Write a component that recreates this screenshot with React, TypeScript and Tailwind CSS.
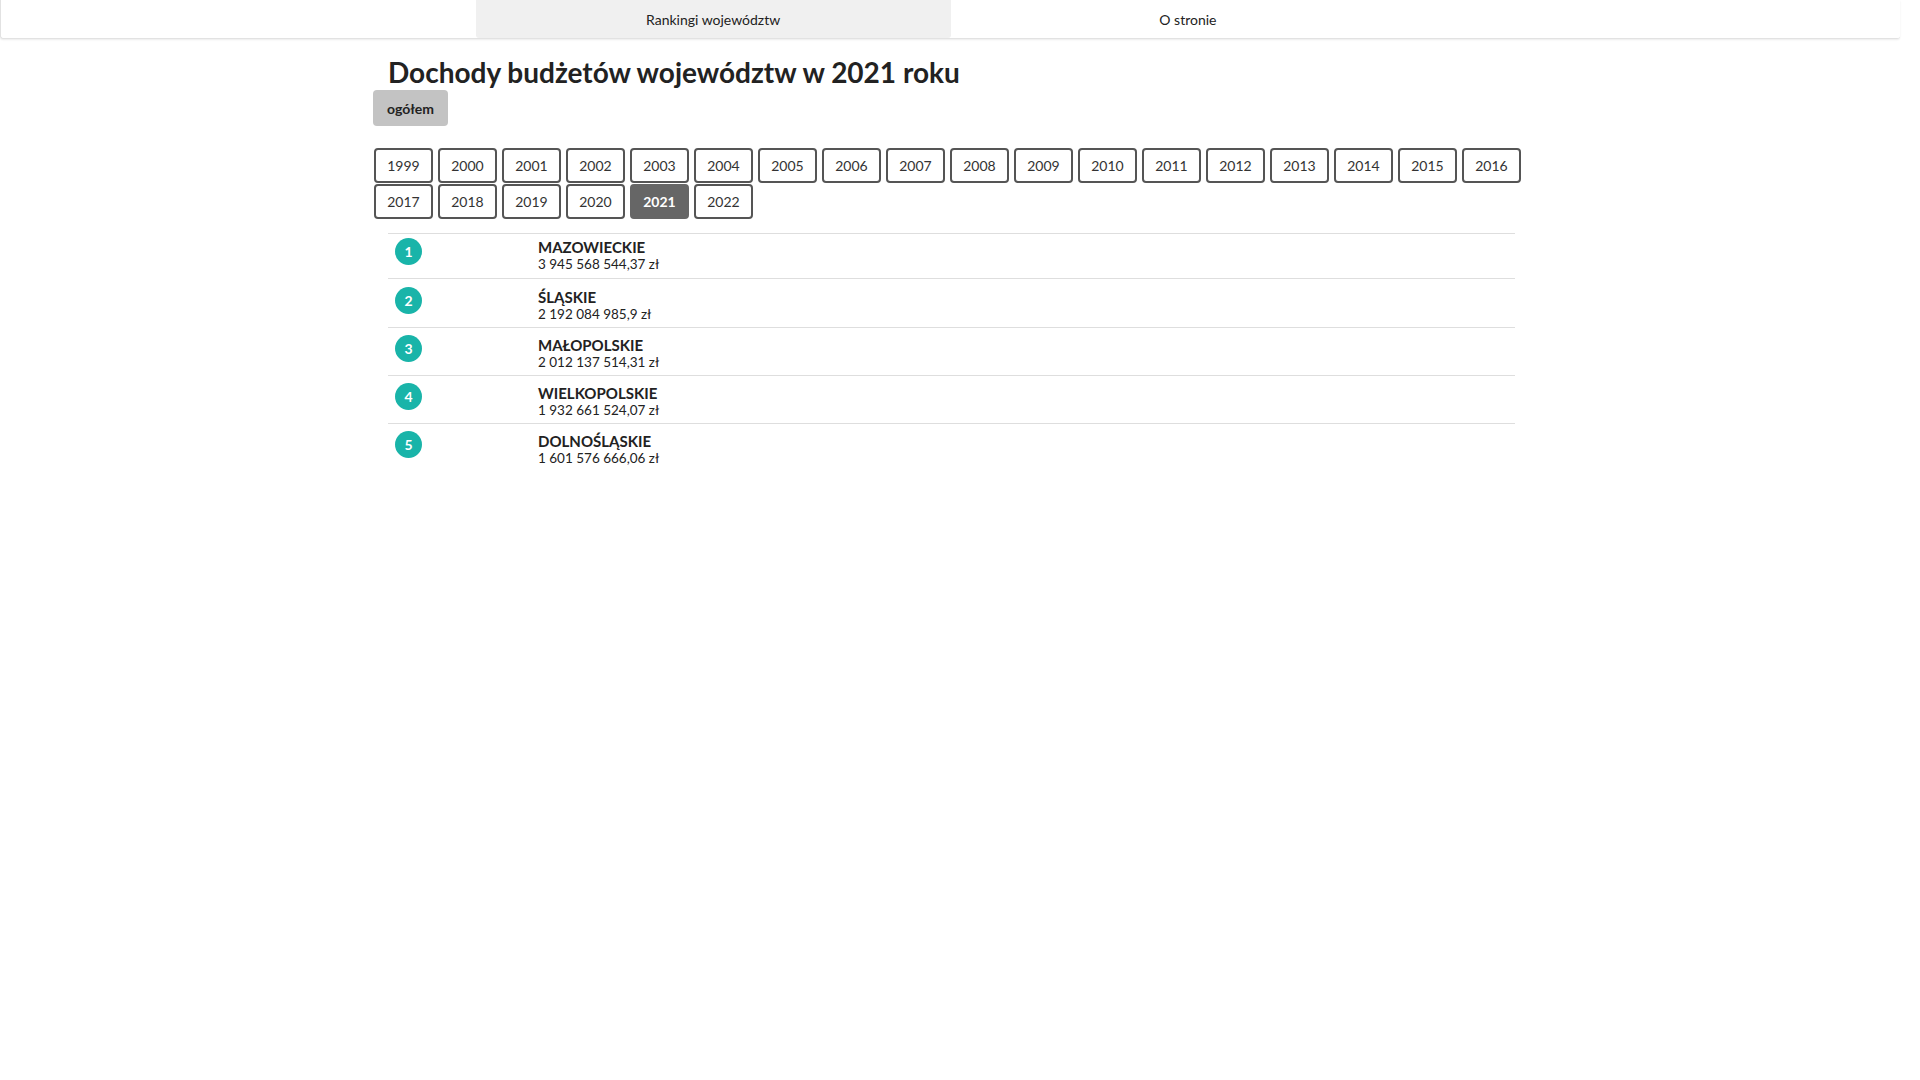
import { useState } from "react";

type Region = {
  name: string;
  value: string;
};

const years = Array.from({ length: 24 }, (_, i) => 1999 + i);

const regions: Region[] = [
  { name: "MAZOWIECKIE", value: "3 945 568 544,37 zł" },
  { name: "ŚLĄSKIE", value: "2 192 084 985,9 zł" },
  { name: "MAŁOPOLSKIE", value: "2 012 137 514,31 zł" },
  { name: "WIELKOPOLSKIE", value: "1 932 661 524,07 zł" },
  { name: "DOLNOŚLĄSKIE", value: "1 601 576 666,06 zł" },
];

export default function App() {
  const [year, setYear] = useState(2021);

  return (
    <div
      className="min-h-screen bg-white text-[#222]"
      style={{ fontFamily: "Lato, 'Noto Sans', sans-serif" }}
    >
      <nav className="grid h-[39px] w-[1900px] grid-cols-4 rounded-b-[3px] border-b border-l border-[#e2e2e2] shadow-[0_1px_2px_rgba(0,0,0,0.08)]">
        <div />
        <a className="flex items-center justify-center rounded-b-[3px] bg-[#f0f0f0] text-[14px]">
          Rankingi województw
        </a>
        <a className="flex items-center justify-center text-[14px]">O stronie</a>
        <div />
      </nav>

      <main className="mx-auto w-[1170px]">
        <h1 className="mt-[15px] pl-[13px] text-[28px] font-bold leading-[36px] text-[#222]">
          Dochody budżetów województw w {year} roku
        </h1>

        <button className="-ml-[2px] h-[36px] w-[75px] rounded-[4px] bg-[#c3c3c3] text-[14px] font-bold text-[#222]">
          ogółem
        </button>

        <div className="-ml-[1px] mt-[22px] flex w-[1160px] flex-wrap gap-x-[5px] gap-y-[1px]">
          {years.map((y) => (
            <button
              key={y}
              onClick={() => setYear(y)}
              className={
                y === year
                  ? "h-[35px] w-[59px] rounded-[4px] border-2 border-[#666] bg-[#666] text-[14px] font-bold text-white"
                  : "h-[35px] w-[59px] rounded-[4px] border-2 border-[#555] bg-white text-[14px] text-[#333]"
              }
            >
              {y}
            </button>
          ))}
        </div>

        <ul className="ml-[13px] mt-[14px] w-[1127px]">
          {regions.map((r, i) => (
            <li
              key={r.name}
              className={
                i === 0
                  ? "flex border-t border-[#dedede] pb-[5px] pt-[4px]"
                  : i === 1
                    ? "flex border-t border-[#dedede] pb-[4px] pt-[9px]"
                    : "flex border-t border-[#dedede] pb-[4px] pt-[8px]"
              }
            >
              <div className="w-[150px] pl-[7px]">
                <span
                  className={
                    i === 0
                      ? "flex h-[27px] w-[27px] items-center justify-center rounded-full bg-[#19b4a9] text-[14px] font-bold text-white"
                      : "-mt-[1px] flex h-[27px] w-[27px] items-center justify-center rounded-full bg-[#19b4a9] text-[14px] font-bold text-white"
                  }
                >
                  {i + 1}
                </span>
              </div>
              <div>
                <div className="text-[15px] font-bold leading-[18px] text-[#222]">{r.name}</div>
                <div className="text-[13.5px] leading-[17px] text-[#222]">{r.value}</div>
              </div>
            </li>
          ))}
        </ul>
      </main>
    </div>
  );
}
